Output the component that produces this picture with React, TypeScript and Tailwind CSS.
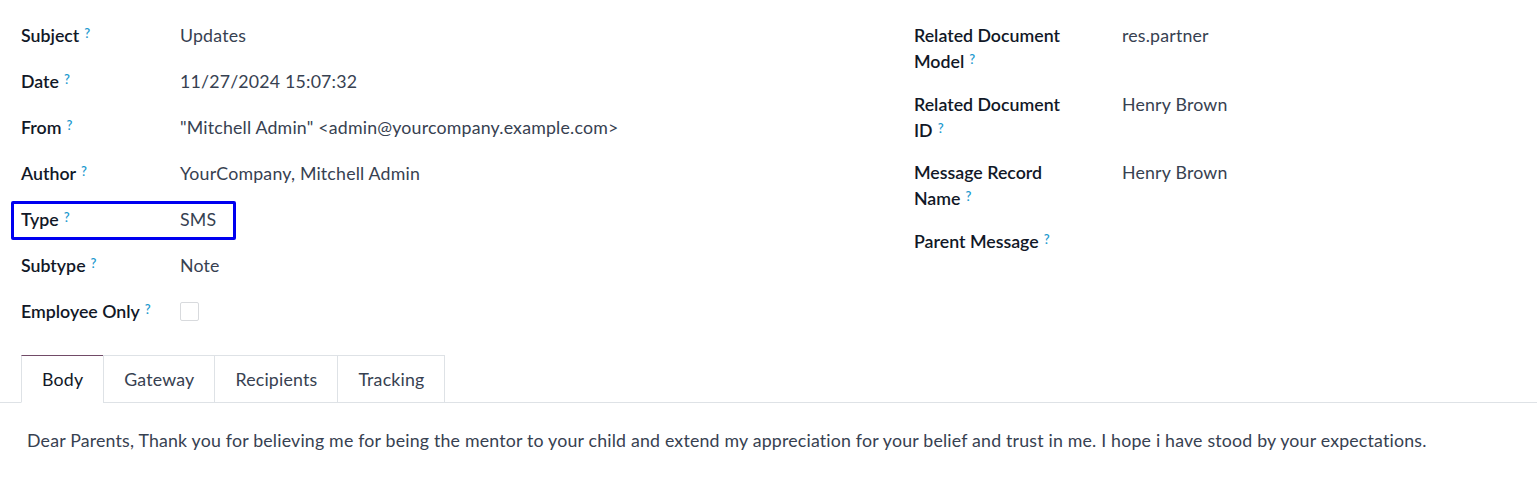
import React from 'react';

const Help: React.FC = () => (
    <sup className="ml-[5px] text-[13px] font-semibold text-[#1f9bcf] relative -top-[4px]">?</sup>
);

type Row = { label: string; value?: React.ReactNode; boxed?: boolean };

const leftRows: Row[] = [
    { label: 'Subject', value: 'Updates' },
    { label: 'Date', value: '11/27/2024 15:07:32' },
    { label: 'From', value: '"Mitchell Admin" <admin@yourcompany.example.com>' },
    { label: 'Author', value: 'YourCompany, Mitchell Admin' },
    { label: 'Type', value: 'SMS', boxed: true },
    { label: 'Subtype', value: 'Note' },
    {
        label: 'Employee Only',
        value: <span className="block w-[19px] h-[19px] mt-[4px] border border-[#d8dadd] rounded-[2px] bg-white" />,
    },
];

const rightRows: Row[] = [
    { label: 'Related Document Model', value: 'res.partner' },
    { label: 'Related Document ID', value: 'Henry Brown' },
    { label: 'Message Record Name', value: 'Henry Brown' },
    { label: 'Parent Message' },
];

const tabs = ['Body', 'Gateway', 'Recipients', 'Tracking'];

const App: React.FC = () => {
    return (
        <div className="w-[1537px] h-[480px] bg-white text-[17.75px] leading-[26.25px] tracking-[0.19px] text-[#374151] font-['Lato','Liberation_Sans',sans-serif] overflow-hidden">
            {/* FIELD GROUPS */}
            <div className="grid grid-cols-[893px_1fr] pl-[21px] pt-[22px]">
                <div className="flex flex-col">
                    {leftRows.map((row) => (
                        <div key={row.label} className="relative flex min-h-[46px] pb-4">
                            {row.boxed && (
                                <span className="absolute -left-[10px] -top-[5px] w-[225px] h-[39px] border-[3px] border-[#0000f0] rounded-[2px]" />
                            )}
                            <div className="w-[159px] shrink-0 font-semibold tracking-normal text-[#111827]">
                                {row.label}
                                <Help />
                            </div>
                            <div>{row.value}</div>
                        </div>
                    ))}
                </div>
                <div className="flex flex-col">
                    {rightRows.map((row) => (
                        <div key={row.label} className="flex min-h-[46px] pb-4">
                            <div className="w-[208px] shrink-0 pr-[46px] font-semibold tracking-normal text-[#111827]">
                                {row.label}
                                <Help />
                            </div>
                            <div>{row.value}</div>
                        </div>
                    ))}
                </div>
            </div>

            {/* TABS */}
            <div className="mt-[11px] flex border-b border-[#dee2e6] pl-[21px]">
                {tabs.map((tab, i) => (
                    <div
                        key={tab}
                        className={`-mb-px h-[48px] px-5 flex items-center border ${
                            i === 0
                                ? 'border-[#dee2e6] border-t-[#714b67] border-b-white text-[#111827]'
                                : 'border-[#dee2e6] -ml-px text-[#374151]'
                        }`}
                    >
                        {tab}
                    </div>
                ))}
            </div>

            {/* BODY */}
            <div className="pl-[27px] pt-[24px]">
                Dear Parents, Thank you for believing me for being the mentor to your child and extend my appreciation for your belief and trust in me. I hope i have stood by your expectations.
            </div>
        </div>
    );
};

export default App;
